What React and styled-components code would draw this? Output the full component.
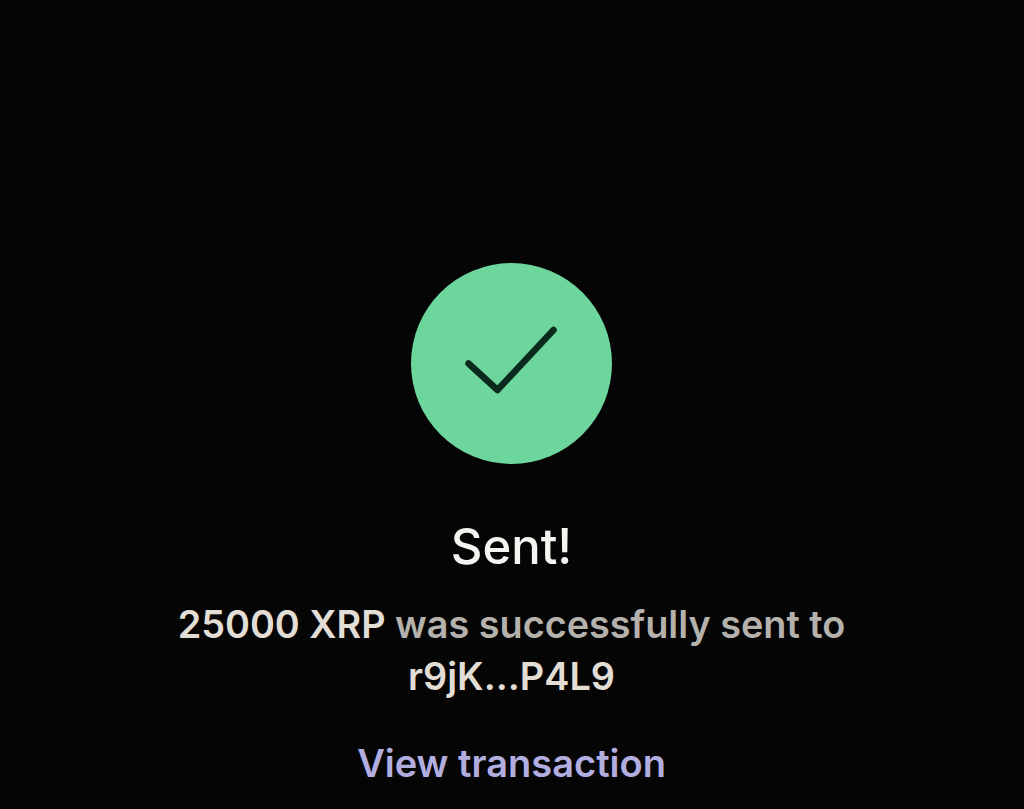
import React from "react";
import styled, { createGlobalStyle } from "styled-components";

const Global = createGlobalStyle`
  html, body { margin: 0; padding: 0; background: #050505; }
`;

const Screen = styled.main`
  box-sizing: border-box;
  width: 100%;
  height: 809px;
  overflow: hidden;
  padding: 263px 1px 0 0;
  background: #050505;
  display: flex;
  flex-direction: column;
  align-items: center;
  font-family: Inter, "Liberation Sans", sans-serif;
`;

const Badge = styled.div`
  width: 201px;
  height: 201px;
  border-radius: 50%;
  background: #6dd69c;
  display: flex;
  align-items: center;
  justify-content: center;
`;

const Title = styled.h1`
  margin: 54px 0 0;
  font-size: 49px;
  line-height: 58px;
  font-weight: 500;
  color: #f6f4f0;
`;

const Message = styled.p`
  margin: 22px 0 0;
  width: 720px;
  text-align: center;
  font-size: 37.800px;
  line-height: 52px;
  font-weight: 600;
  color: #b5b1ac;
`;

const Strong = styled.span`
  color: #e2ded6;
`;

const Link = styled.a`
  margin-top: 39px;
  font-size: 38px;
  line-height: 44px;
  font-weight: 600;
  color: #b3aee0;
  text-decoration: none;
`;

export default function App() {
  return (
    <>
      <Global />
      <Screen>
        <Badge>
          <svg width="201" height="201" viewBox="0 0 201 201" fill="none">
            <path
              d="M57.500 100.500 L86.500 127 L142.500 67"
              stroke="#0b2a1e"
              strokeWidth="6.500"
              strokeLinecap="round"
              strokeLinejoin="round"
            />
          </svg>
        </Badge>
        <Title>Sent!</Title>
        <Message>
          <Strong>25000 XRP</Strong> was successfully sent to <Strong>r9jK...P4L9</Strong>
        </Message>
        <Link href="#">View transaction</Link>
      </Screen>
    </>
  );
}
